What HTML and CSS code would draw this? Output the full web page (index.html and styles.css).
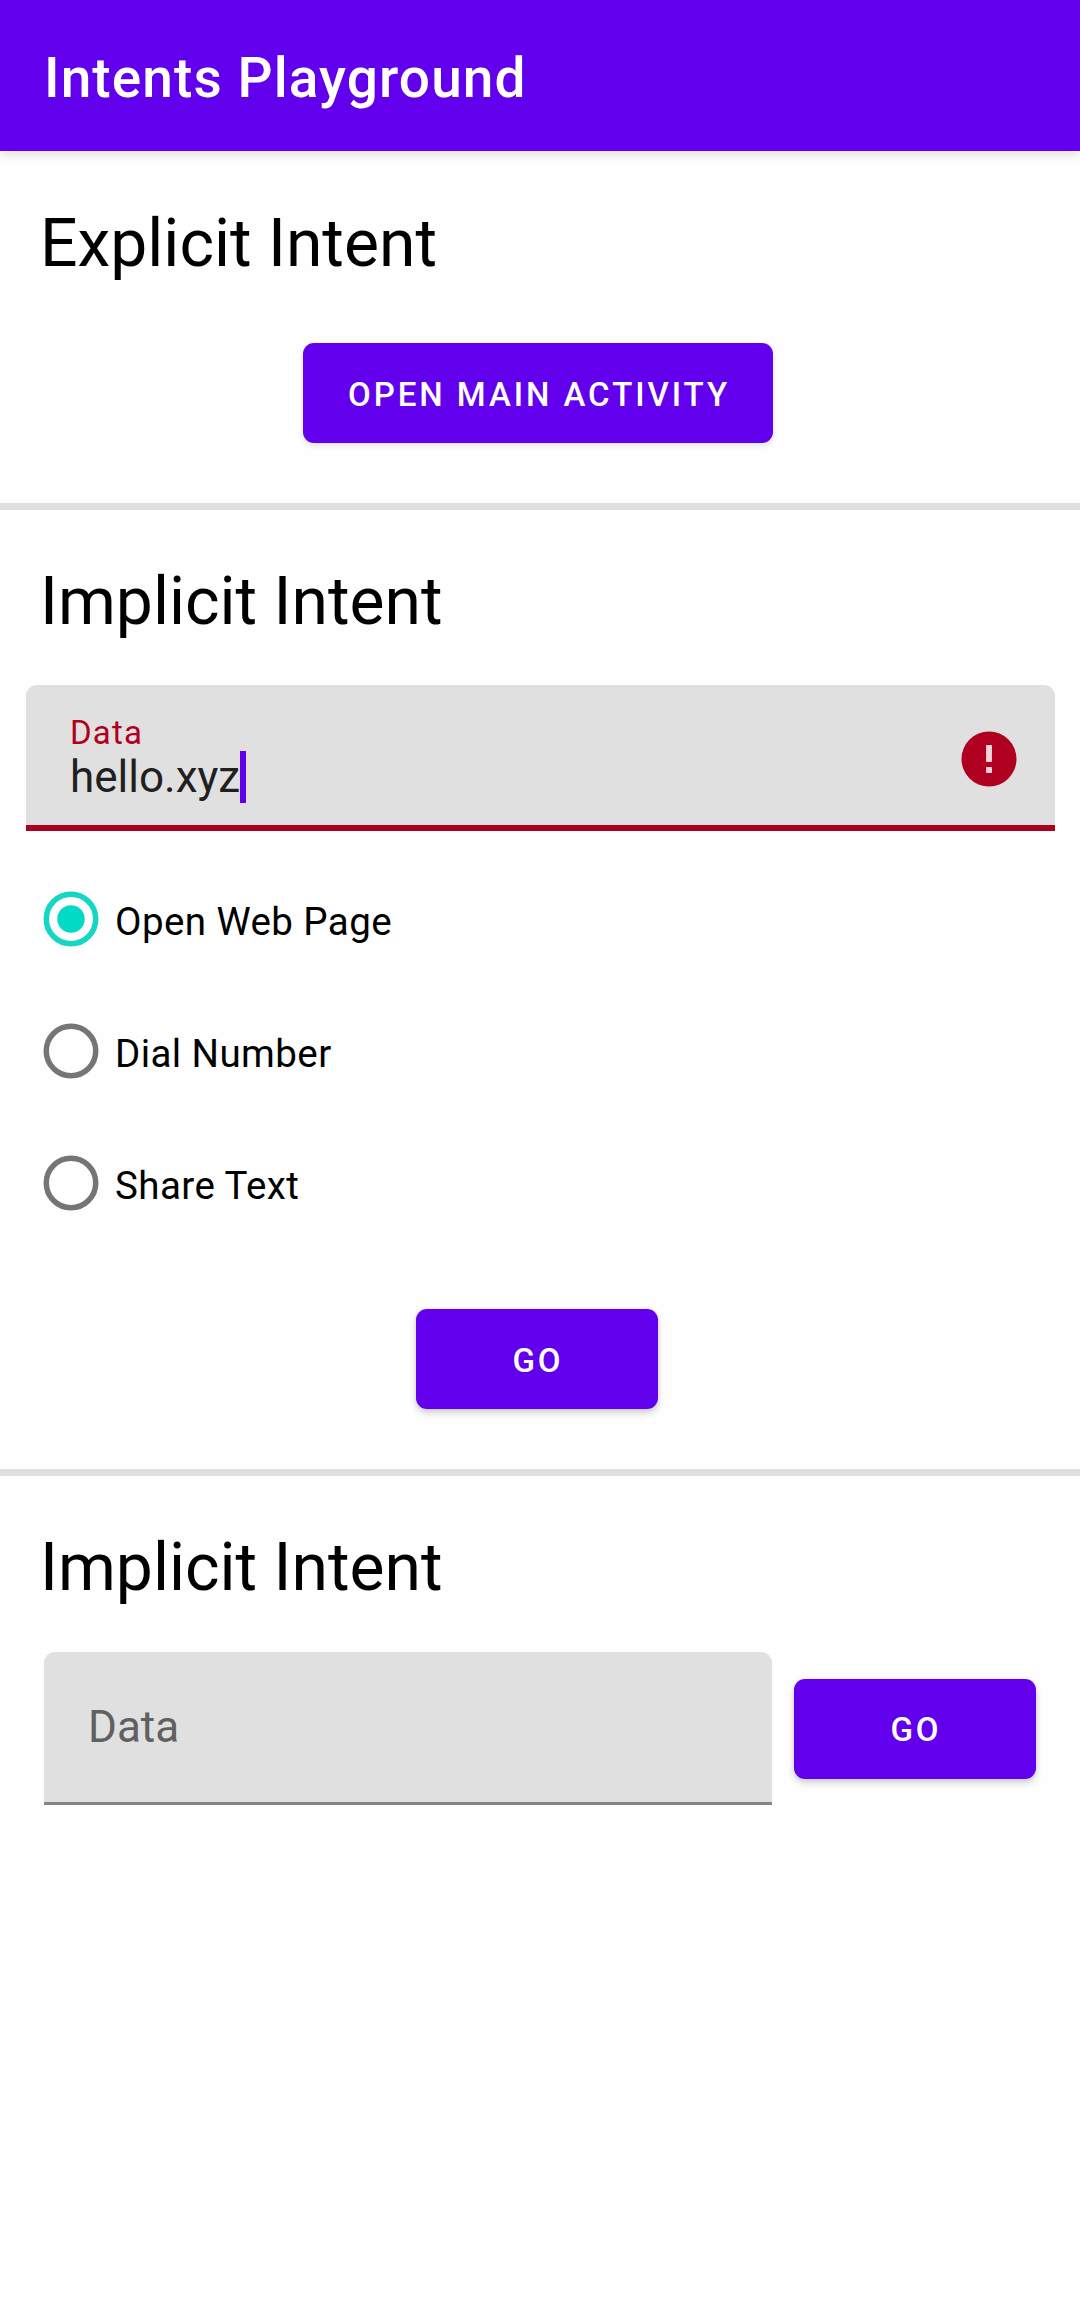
FILE: index.html
```html
<!DOCTYPE html>
<html lang="en">
<head>
<meta charset="utf-8">
<title>Intents Playground</title>
<link rel="stylesheet" href="styles.css">
</head>
<body>
<header class="app-bar"><h1 class="app-title">Intents Playground</h1></header>
<main>
  <section class="section section-first">
    <h2 class="heading">Explicit Intent</h2>
    <button class="button button-main" type="button"><span>OPEN MAIN ACTIVITY</span></button>
  </section>
  <section class="section">
    <h2 class="heading">Implicit Intent</h2>
    <div class="field field-error">
      <div class="field-body">
        <span class="field-label">Data</span>
        <span class="field-value">hello.xyz<i class="caret"></i></span>
      </div>
      <svg class="error-icon" viewBox="0 0 24 24"><path fill-rule="evenodd" d="M12 2a10 10 0 1 0 0 20a10 10 0 1 0 0-20zM11 7h2v6h-2zM11 15h2v2h-2z"/><path class="mark" d="M11 7h2v6h-2zM11 15h2v2h-2z"/></svg>
    </div>
    <div class="radios">
      <div class="radio"><svg class="dot dot-on" viewBox="0 0 24 24"><circle class="ring" cx="12" cy="12" r="9"/><circle class="core" cx="12" cy="12" r="5"/></svg><span>Open Web Page</span></div>
      <div class="radio"><svg class="dot" viewBox="0 0 24 24"><circle class="ring" cx="12" cy="12" r="9"/></svg><span>Dial Number</span></div>
      <div class="radio"><svg class="dot" viewBox="0 0 24 24"><circle class="ring" cx="12" cy="12" r="9"/></svg><span>Share Text</span></div>
    </div>
    <button class="button button-go" type="button"><span>GO</span></button>
  </section>
  <section class="section section-last">
    <h2 class="heading">Implicit Intent</h2>
    <div class="inline-form">
      <div class="field field-empty">Data</div>
      <button class="button" type="button"><span>GO</span></button>
    </div>
  </section>
</main>
</body>
</html>
```
FILE: styles.css
```css
* { box-sizing: border-box; }
body {
  margin: 0;
  min-height: 2302px;
  background: #fefefe;
  color: #000;
  font-family: Roboto, "Liberation Sans", sans-serif;
}
.app-bar {
  display: flex;
  align-items: center;
  height: 151px;
  padding: 4px 44px 0;
  background: #6200ee;
  color: #fff;
  box-shadow: 0 2px 12px rgba(0, 0, 0, .16);
}
.app-title {
  margin: 0;
  font-size: 55px;
  font-weight: 500;
  line-height: 64px;
  letter-spacing: 1.08px;
}
.section {
  display: flex;
  flex-direction: column;
  padding: 53px 0 60px;
  border-bottom: 7px solid #e0e0e0;
}
.section-first { padding-top: 54px; }
.section-last { border-bottom: 0; }
.heading {
  margin: 0 0 44px;
  padding-left: 40px;
  font-size: 66px;
  font-weight: 400;
  line-height: 78px;
}
.section-first .heading { margin-bottom: 60px; }
.section-last .heading { margin-bottom: 45px; }
.button {
  flex: none;
  width: 242px;
  height: 100px;
  padding: 3px 0 0 2px;
  border: 0;
  border-radius: 11px;
  background: #6200ee;
  color: #fff;
  font-family: inherit;
  font-size: 33px;
  font-weight: 500;
  line-height: 40px;
  letter-spacing: 2.95px;
  box-shadow: 0 4px 7px rgba(0, 0, 0, .18), 0 0 4px rgba(0, 0, 0, .08);
}
.button-main {
  width: 470px;
  margin-left: 303px;
  box-shadow: 0 2px 6px rgba(0, 0, 0, .14);
}
.button-go { margin: 60px 0 0 416px; }
.field {
  display: flex;
  background: #e0e0e0;
  border-radius: 11px 11px 0 0;
}
.field-error {
  align-items: center;
  justify-content: space-between;
  height: 146px;
  margin: 0 25px 0 26px;
  padding: 0 33px 0 44px;
  border-bottom: 6px solid #a80020;
}
.field-body {
  display: flex;
  flex-direction: column;
  padding-top: 7px;
}
.field-label {
  color: #b00020;
  font-size: 33px;
  line-height: 36px;
  letter-spacing: 1.2px;
}
.field-value {
  display: flex;
  align-items: center;
  height: 52px;
  color: #202020;
  font-size: 44px;
  line-height: 52px;
}
.caret { width: 6px; height: 52px; background: #6200ee; }
.error-icon { width: 66px; height: 66px; margin-top: 7px; fill: #b00020; }
.mark { fill: #f0d4da; }
.radios { padding-top: 22px; }
.radio {
  display: flex;
  align-items: center;
  gap: 11px;
  height: 132px;
  padding-left: 38px;
  font-size: 38.5px;
  line-height: 46px;
  letter-spacing: .42px;
}
.radio span { padding-top: 6px; }
.dot { width: 66px; height: 66px; }
.ring { fill: none; stroke: #757575; stroke-width: 2; }
.dot-on .ring { stroke: #14d6c4; }
.core { fill: #03dac5; }
.inline-form {
  display: flex;
  align-items: center;
  gap: 22px;
  padding: 0 44px;
}
.field-empty {
  flex: 1;
  align-items: center;
  height: 153px;
  padding-left: 44px;
  border-bottom: 3px solid #858585;
  color: #606060;
  font-size: 44px;
}
```
